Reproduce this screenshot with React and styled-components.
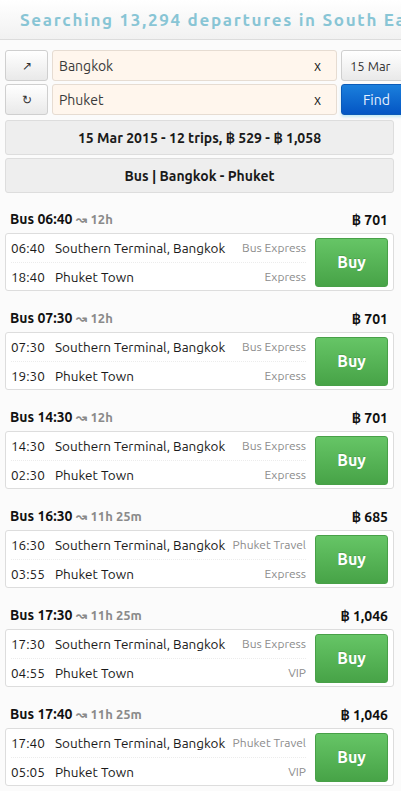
import React from "react";
import styled, { createGlobalStyle } from "styled-components";

const GlobalStyle = createGlobalStyle`
    html, body {
        margin: 0;
        padding: 0;
        background: #fbfbfb;
        font-family: "Ubuntu", "Lato", "Open Sans", sans-serif;
        color: #111;
        overflow: hidden;
    }
`;

const Page = styled.div`
    width: 401px;
    overflow: hidden;
`;

const Header = styled.header`
    height: 39px;
    border-bottom: 1px solid #dcdcdc;
    background: linear-gradient(#ffffff, #f1f1f1);
    display: flex;
    align-items: center;
    padding-left: 20px;
    white-space: nowrap;
    overflow: hidden;
`;

const Title = styled.h1`
    margin: 0;
    font-size: 17px;
    font-weight: 700;
    letter-spacing: 1.7px;
    color: #88c5d5;
`;

const Form = styled.form`
    display: grid;
    grid-template-columns: 43px 285px 80px;
    grid-auto-rows: 31px;
    column-gap: 4px;
    row-gap: 3px;
    margin: 10px 0 0 5px;
`;

const IconButton = styled.button`
    border: 1px solid #cfcfcf;
    border-radius: 3px;
    background: linear-gradient(#ffffff, #e9e9e9);
    color: #333;
    font-size: 12px;
    padding: 0;
    display: flex;
    align-items: center;
    justify-content: center;
`;

const Field = styled.div`
    border: 1px solid #e6dcd2;
    border-radius: 3px;
    background: #fff6ed;
    display: flex;
    align-items: center;
    justify-content: space-between;
    padding: 0 15px 0 6px;
    font-size: 14px;
    color: #3a3a3a;
`;

const Clear = styled.span`
    color: #222;
    font-size: 14px;
`;

const SideButton = styled.button`
    border-radius: 3px;
    padding: 0 0 0 ${(p) => (p.$primary ? "21px" : "8px")};
    text-align: left;
    font-family: inherit;
    font-size: ${(p) => (p.$primary ? "14px" : "13px")};
    color: ${(p) => (p.$primary ? "#e8f2ff" : "#333")};
    border: 1px solid ${(p) => (p.$primary ? "#0b5bb8" : "#cfcfcf")};
    background: ${(p) =>
        p.$primary
            ? "linear-gradient(#1b7fdc, #0456c4)"
            : "linear-gradient(#ffffff, #e9e9e9)"};
    box-shadow: ${(p) => (p.$primary ? "0 2px 3px rgba(90, 200, 230, 0.35)" : "none")};
`;

const Content = styled.div`
    width: 389px;
    margin: 5px 0 0 5px;
`;

const Summary = styled.div`
    display: flex;
    flex-direction: column;
    gap: 3px;
`;

const Bar = styled.div`
    height: 33px;
    border: 1px solid #dddddd;
    border-radius: 3px;
    background: #eeeeee;
    display: flex;
    align-items: center;
    justify-content: center;
    font-size: 14px;
    font-weight: 700;
    color: #1a1a1a;
`;

const TripList = styled.div`
    padding-top: 16px;
`;

const Trip = styled.section`
    padding-bottom: 17px;
`;

const TripHead = styled.div`
    height: 20px;
    margin-bottom: 4px;
    display: flex;
    align-items: center;
    justify-content: space-between;
    padding: 0 6px 0 5px;
    font-size: 14px;
    font-weight: 700;
`;

const Duration = styled.span`
    color: #8a8a8a;
    font-size: 13px;
    font-weight: 600;
    margin-left: 4px;
`;

const Card = styled.div`
    height: 56px;
    border: 1px solid #dddddd;
    border-radius: 3px;
    background: #ffffff;
    display: flex;
    align-items: center;
    padding: 0 5px 0 5px;
`;

const Legs = styled.div`
    flex: 1;
    display: flex;
    flex-direction: column;
`;

const Leg = styled.div`
    height: 28px;
    display: flex;
    align-items: center;
    font-size: 13.5px;
    color: #1a1a1a;
    border-top: ${(p) => (p.$first ? "none" : "1px dotted #ececec")};
    margin-right: 9px;
`;

const Time = styled.span`
    width: 44px;
`;

const Place = styled.span`
    flex: 1;
`;

const Operator = styled.span`
    color: #8c8c8c;
    font-size: 12px;
`;

const Buy = styled.button`
    width: 73px;
    height: 49px;
    border: 1px solid #48a048;
    border-radius: 3px;
    background: linear-gradient(#66c566, #47a347);
    color: #ffffff;
    font-family: inherit;
    font-size: 16px;
    font-weight: 700;
    text-shadow: 0 -1px 0 rgba(0, 0, 0, 0.15);
`;

const trips = [
    { dep: "06:40", arr: "18:40", dur: "12h", price: "701", op: "Bus Express", cls: "Express" },
    { dep: "07:30", arr: "19:30", dur: "12h", price: "701", op: "Bus Express", cls: "Express" },
    { dep: "14:30", arr: "02:30", dur: "12h", price: "701", op: "Bus Express", cls: "Express" },
    { dep: "16:30", arr: "03:55", dur: "11h 25m", price: "685", op: "Phuket Travel", cls: "Express" },
    { dep: "17:30", arr: "04:55", dur: "11h 25m", price: "1,046", op: "Bus Express", cls: "VIP" },
    { dep: "17:40", arr: "05:05", dur: "11h 25m", price: "1,046", op: "Phuket Travel", cls: "VIP" },
];

const App = () => (
    <Page>
        <GlobalStyle />
        <Header>
            <Title>Searching 13,294 departures in South East Asia</Title>
        </Header>
        <Form onSubmit={(e) => e.preventDefault()}>
            <IconButton type="button">↗</IconButton>
            <Field>
                Bangkok
                <Clear>x</Clear>
            </Field>
            <SideButton type="button">15 Mar</SideButton>
            <IconButton type="button">↻</IconButton>
            <Field>
                Phuket
                <Clear>x</Clear>
            </Field>
            <SideButton type="submit" $primary>
                Find
            </SideButton>
        </Form>
        <Content>
            <Summary>
                <Bar>15 Mar 2015 - 12 trips, ฿ 529 - ฿ 1,058</Bar>
                <Bar>Bus | Bangkok - Phuket</Bar>
            </Summary>
            <TripList>
                {trips.map((trip) => (
                    <Trip key={trip.dep}>
                        <TripHead>
                            <span>
                                Bus {trip.dep}
                                <Duration>↝ {trip.dur}</Duration>
                            </span>
                            <span>฿ {trip.price}</span>
                        </TripHead>
                        <Card>
                            <Legs>
                                <Leg $first>
                                    <Time>{trip.dep}</Time>
                                    <Place>Southern Terminal, Bangkok</Place>
                                    <Operator>{trip.op}</Operator>
                                </Leg>
                                <Leg>
                                    <Time>{trip.arr}</Time>
                                    <Place>Phuket Town</Place>
                                    <Operator>{trip.cls}</Operator>
                                </Leg>
                            </Legs>
                            <Buy type="button">Buy</Buy>
                        </Card>
                    </Trip>
                ))}
            </TripList>
        </Content>
    </Page>
);

export default App;
